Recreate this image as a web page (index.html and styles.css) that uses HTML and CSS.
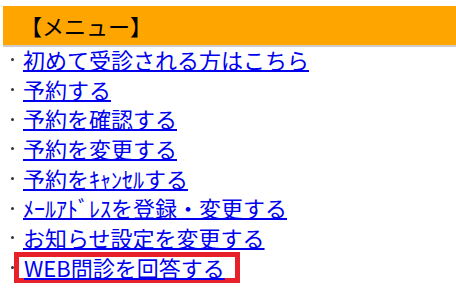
FILE: index.html
```html
<!DOCTYPE html>
<html lang="ja">
<head>
<meta charset="utf-8">
<link rel="stylesheet" href="styles.css">
</head>
<body>
<div class="menu">
  <div class="menu-title">【メニュー】</div>
  <ul class="menu-list">
    <li><a href="#">初めて受診される方はこちら</a></li>
    <li><a href="#">予約する</a></li>
    <li><a href="#">予約を確認する</a></li>
    <li><a href="#">予約を変更する</a></li>
    <li><a href="#">予約をｷｬﾝｾﾙする</a></li>
    <li><a href="#">ﾒｰﾙｱﾄﾞﾚｽを登録・変更する</a></li>
    <li><a href="#">お知らせ設定を変更する</a></li>
    <li class="highlight"><span class="box"><a href="#">WEB問診を回答する</a></span></li>
  </ul>
</div>
</body>
</html>
```
FILE: styles.css
```css
html, body {
  margin: 0;
  padding: 0;
  background: #fff;
}
body {
  font-family: "Noto Sans CJK JP", "Noto Sans", sans-serif;
  overflow: hidden;
}
.menu {
  padding-top: 6px;
  padding-left: 3px;
}
.menu-title {
  background: #ffa500;
  height: 39px;
  border-bottom: 2px solid #cccccc;
  font-size: 22px;
  line-height: 39px;
  color: #000;
  padding-left: 17px;
}
.menu-list {
  list-style: none;
  margin: -2px 0 0 0;
  padding: 0 0 0 8px;
}
.menu-list li {
  font-size: 22px;
  line-height: 29.7px;
  height: 29.7px;
  display: flex;
  align-items: center;
}
.menu-list li::before {
  content: "";
  width: 3px;
  height: 3px;
  border-radius: 50%;
  background: #333;
  margin-right: 9px;
  flex: none;
}
.menu-list a {
  color: #0000ee;
  text-decoration: underline;
  text-underline-offset: 1px;
}
.box {
  border: 5px solid #e8202a;
  margin: 0 0 0 -9px;
  padding: 0 10px 0 5px;
  line-height: 21px;
}
```
